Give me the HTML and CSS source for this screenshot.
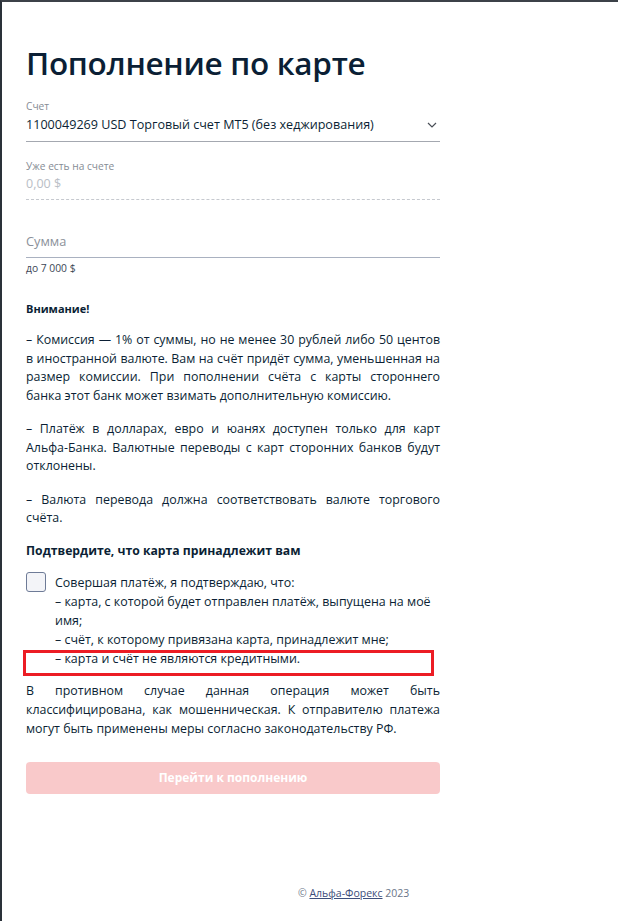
FILE: index.html
```html
<!DOCTYPE html>
<html lang="ru">
<head>
<meta charset="utf-8">
<title>Пополнение по карте</title>
<link rel="stylesheet" href="styles.css">
</head>
<body>
<div class="frame">
  <main class="content">
    <h1 class="title">Пополнение по карте</h1>

    <div class="field field-select">
      <div class="field-label">Счет</div>
      <div class="field-row">
        <span class="field-value">1100049269 USD Торговый счет MT5 (без хеджирования)</span>
        <svg class="chevron" width="10" height="6" viewBox="0 0 10 6"><path d="M1 1l4 4 4-4" fill="none" stroke="#4a4f57" stroke-width="1.2"/></svg>
      </div>
    </div>

    <div class="field field-static">
      <div class="field-label">Уже есть на счете</div>
      <div class="field-value muted">0,00 $</div>
    </div>

    <div class="field field-input">
      <div class="field-placeholder">Сумма</div>
    </div>
    <div class="field-hint">до 7 000 $</div>

    <div class="notice">
      <p class="notice-title">Внимание!</p>
      <p>– Комиссия — 1% от суммы, но не менее 30 рублей либо 50 центов в иностранной валюте. Вам на счёт придёт сумма, уменьшенная на размер комиссии. При пополнении счёта с карты стороннего банка&nbsp;этот банк может взимать дополнительную комиссию.</p>
      <p>– Платёж в долларах, евро и юанях доступен только для карт Альфа-Банка. Валютные переводы с карт сторонних банков будут отклонены.</p>
      <p>– Валюта перевода должна соответствовать валюте торгового счёта.</p>
    </div>

    <h2 class="confirm-title">Подтвердите, что карта принадлежит вам</h2>

    <label class="consent">
      <span class="checkbox"></span>
      <span class="consent-text">
        <span class="consent-line">Совершая платёж, я подтверждаю, что:</span>
        <span class="consent-line">– карта, с которой будет отправлен платёж, выпущена на моё имя;</span>
        <span class="consent-line">– счёт, к которому привязана карта, принадлежит мне;</span>
        <span class="consent-line marked">– карта и счёт не являются кредитными.<span class="highlight"></span></span>
      </span>
    </label>

    <p class="warning">В противном случае данная операция может быть классифицирована, как мошенническая. К отправителю платежа могут быть применены меры согласно законодательству РФ.</p>

    <button class="submit" type="button" disabled>Перейти к пополнению</button>
  </main>

  <footer class="footer">© <a href="#" class="footer-link">Альфа-Форекс</a> 2023</footer>
</div>
</body>
</html>
```

FILE: styles.css
```css
* { box-sizing: border-box; }

html, body {
  margin: 0;
  padding: 0;
  background: #ffffff;
}

body {
  font-family: "Open Sans", "Noto Sans", "Liberation Sans", sans-serif;
  color: #0b1f35;
}

.frame {
  min-height: 921px;
  border-top: 2px solid #3c4148;
  border-left: 2px solid #2a3139;
  display: flex;
  flex-direction: column;
}

.content {
  width: 438px;
  padding: 0 0 0 24px;
}

.title {
  margin: 41px 0 0;
  font-size: 31.5px;
  line-height: 40px;
  font-weight: 600;
  letter-spacing: -0.3px;
  color: #0b1f35;
}

.field {
  border-bottom: 1px solid #a4a8b0;
}

.field-select {
  margin-top: 16px;
  padding-bottom: 5px;
}

.field-label {
  font-size: 10.2px;
  line-height: 14px;
  color: #868c95;
}

.field-row {
  display: flex;
  align-items: center;
  justify-content: space-between;
  margin-top: 1px;
  padding-right: 3px;
}

.field-value {
  font-size: 12.6px;
  line-height: 22px;
  color: #0b1f35;
}

.field-value.muted {
  font-size: 12.5px;
  color: #b9bec6;
}

.chevron {
  display: block;
}

.field-static {
  margin-top: 17px;
  padding-bottom: 4px;
  border-bottom: 1px dashed #c6c9cf;
}

.field-input {
  margin-top: 30px;
  padding-bottom: 5px;
  border-bottom-color: #a9b1c0;
}

.field-placeholder {
  font-size: 12.8px;
  line-height: 22px;
  color: #8b919a;
}

.field-hint {
  margin-top: 3px;
  font-size: 10.3px;
  line-height: 14px;
  color: #3d4756;
}

.notice {
  margin-top: 25px;
}

.notice p {
  margin: 0 0 15px;
  font-size: 12.4px;
  line-height: 18.5px;
  text-align: justify;
}

.notice .notice-title {
  font-weight: 700;
  font-size: 11px;
  margin-bottom: 12.5px;
}

.notice p:last-child {
  margin-bottom: 0;
}

.confirm-title {
  margin: 14px 0 0;
  font-size: 12.2px;
  line-height: 18px;
  font-weight: 700;
}

.consent {
  display: flex;
  gap: 9px;
  margin-top: 12px;
  cursor: pointer;
}

.checkbox {
  flex: none;
  width: 20px;
  height: 20px;
  border: 1px solid #6e7b97;
  border-radius: 3px;
  background: #f3f4f8;
}

.consent-text {
  display: flex;
  flex-direction: column;
  padding-top: 1.5px;
  padding-right: 6px;
  font-size: 12.45px;
  line-height: 19px;
}

.consent-line {
  display: block;
}

.marked {
  position: relative;
}

.highlight {
  position: absolute;
  left: -32px;
  top: 1px;
  width: 411px;
  height: 26px;
  border: 3px solid #ec1c24;
  pointer-events: none;
}

.warning {
  margin: 13px 0 0;
  font-size: 12.4px;
  line-height: 19px;
  text-align: justify;
}

.submit {
  display: block;
  width: 414px;
  height: 32px;
  margin-top: 23.5px;
  border: none;
  border-radius: 4px;
  background: #f9c9ca;
  color: #ffffff;
  font-family: inherit;
  font-size: 12px;
  font-weight: 700;
}

.footer {
  margin-top: auto;
  padding: 0 0 20px 296px;
  font-size: 10.5px;
  line-height: 16px;
  color: #6a7588;
}

.footer-link {
  color: #3d4e7b;
  text-decoration: underline;
}
```
